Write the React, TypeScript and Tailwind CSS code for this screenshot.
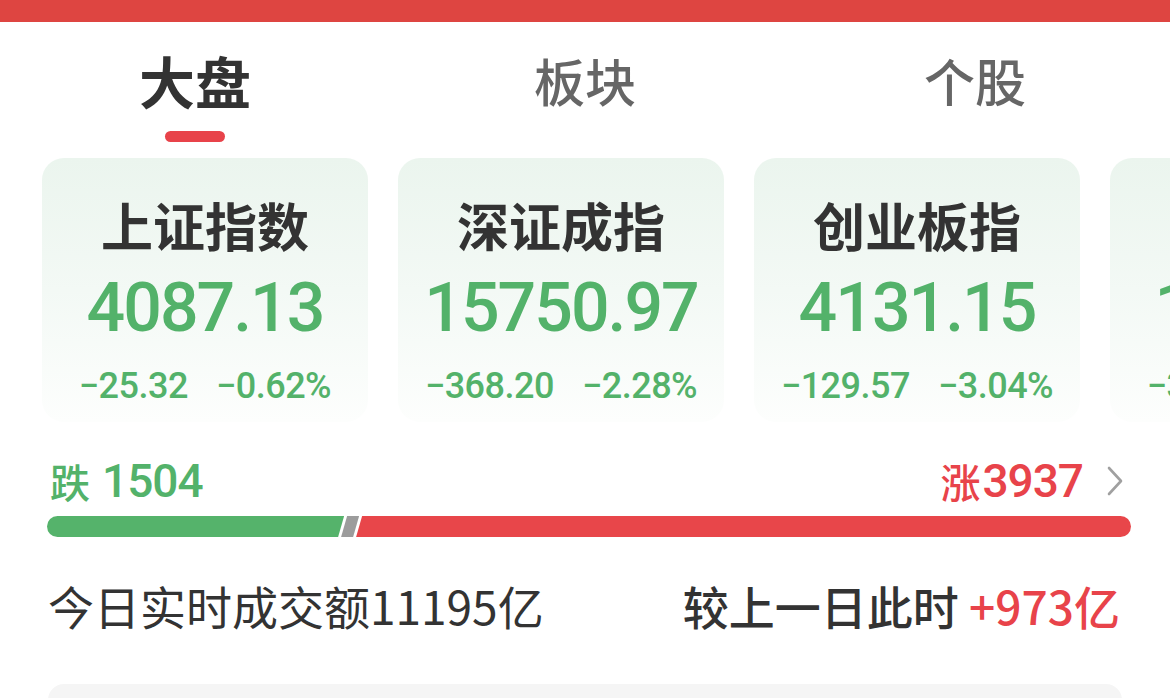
import React from "react";

const cjk = { fontFamily: '"Noto Sans CJK SC", "Noto Sans", sans-serif' };
const num = { fontFamily: 'Roboto, "Noto Sans CJK SC", sans-serif' };

type IndexCard = { name: string; value: string; change: string; pct: string };

const indices: IndexCard[] = [
  { name: "上证指数", value: "4087.13", change: "-25.32", pct: "-0.62%" },
  { name: "深证成指", value: "15750.97", change: "-368.20", pct: "-2.28%" },
  { name: "创业板指", value: "4131.15", change: "-129.57", pct: "-3.04%" },
  { name: "科创50", value: "1346.31", change: "-32.70", pct: "-2.37%" },
];

function Tabs() {
  const tabs = ["大盘", "板块", "个股"];
  return (
    <div className="flex">
      {tabs.map((t, i) => (
        <div key={t} className="flex w-[390px] flex-col items-center pt-[30px]">
          <span
            style={cjk}
            className={
              i === 0
                ? "text-[56px] leading-[56px] font-bold text-[#333333]"
                : "text-[51px] leading-[56px] font-medium text-[#666666]"
            }
          >
            {t}
          </span>
          <div
            className={
              i === 0
                ? "mt-[23px] h-[11px] w-[60px] rounded-full bg-[#e8434a]"
                : "mt-[23px] h-[11px] w-[60px]"
            }
          />
        </div>
      ))}
    </div>
  );
}

function Card({ c }: { c: IndexCard }) {
  return (
    <div className="flex h-[264px] w-[326px] shrink-0 flex-col items-center rounded-[22px] bg-gradient-to-b from-[#ebf5ee] via-[#f3f9f5] to-[#fdfefd] pt-[41px]">
      <div style={cjk} className="text-[52px] leading-[52px] font-bold text-[#333333]">
        {c.name}
      </div>
      <div
        style={num}
        className="mt-[24px] text-[68px] leading-[66px] font-medium tracking-[-2px] text-[#53b26a]"
      >
        {c.value}
      </div>
      <div
        style={num}
        className="mt-[28px] flex gap-[28px] text-[36px] leading-[34px] font-medium tracking-[-0.5px] text-[#53b26a]"
      >
        <span>{c.change.replace("-", "−")}</span>
        <span>{c.pct.replace("-", "−")}</span>
      </div>
    </div>
  );
}

function BreadthBar() {
  return (
    <div className="ml-[47px] mr-[39px] mt-[13px] flex h-[21px]">
      <div className="h-full flex-[296] rounded-l-full bg-[#55b36b] [clip-path:polygon(0_0,100%_0,calc(100%-6px)_100%,0_100%)]" />
      <div className="-ml-[3px] h-full w-[18px] bg-[#9c9c9c] [clip-path:polygon(6px_0,100%_0,calc(100%-6px)_100%,0_100%)]" />
      <div className="-ml-[3px] h-full flex-[772] rounded-r-full bg-[#e8464a] [clip-path:polygon(6px_0,100%_0,100%_100%,0_100%)]" />
    </div>
  );
}

export default function App() {
  return (
    <div className="h-[698px] w-[1170px] overflow-hidden bg-white">
      <div className="h-[22px] bg-[#de4541]" />
      <Tabs />

      <div className="mt-[16px] flex gap-[30px] pl-[42px]">
        {indices.map((c) => (
          <Card key={c.name} c={c} />
        ))}
      </div>

      <div className="ml-[50px] mr-[45px] mt-[37px] flex h-[44px] items-center justify-between">
        <div className="flex items-center text-[#53b26a]">
          <span style={cjk} className="text-[40px] leading-[44px] font-medium">
            跌
          </span>
          <span style={num} className="ml-[12px] text-[46px] leading-[44px] font-medium tracking-[-1px]">
            1504
          </span>
        </div>
        <div className="flex items-center">
          <span style={cjk} className="text-[40px] leading-[44px] font-medium text-[#e8434a]">
            涨
          </span>
          <span style={num} className="ml-[2px] text-[46px] leading-[44px] font-medium tracking-[-1px] text-[#e8434a]">
            3937
          </span>
          <svg width="20" height="32" viewBox="0 0 20 32" className="ml-[22px]">
            <polyline
              points="4,3 16,16 4,29"
              fill="none"
              stroke="#a0a0a0"
              strokeWidth="2.6"
              strokeLinecap="round"
              strokeLinejoin="round"
            />
          </svg>
        </div>
      </div>

      <BreadthBar />

      <div
        style={cjk}
        className="ml-[48px] mr-[50px] mt-[45px] flex h-[46px] items-center justify-between text-[46px] leading-[46px] text-[#333333]"
      >
        <span>今日实时成交额11195亿</span>
        <span className="font-medium">
          较上一日此时 <span className="text-[#e8434a]">+973亿</span>
        </span>
      </div>

      <div className="mx-[48px] mt-[56px] h-[80px] rounded-[16px] bg-[#f5f5f5]" />
    </div>
  );
}
